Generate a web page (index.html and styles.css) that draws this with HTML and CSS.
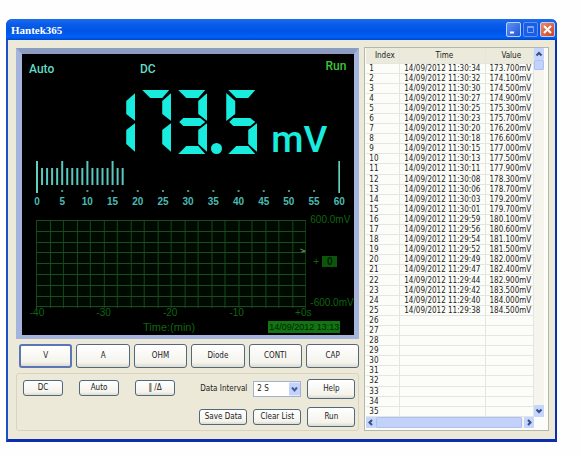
FILE: index.html
```html
<!DOCTYPE html>
<html lang="en">
<head>
<meta charset="utf-8">
<title>Hantek365</title>
<link rel="stylesheet" href="styles.css">
</head>
<body>
<main class="window">
  <header class="titlebar">
    <h1>Hantek365</h1>
    <div class="caption">
      <button type="button" aria-label="Minimize"><svg viewBox="0 0 13 13"><path d="M3 9.5h4" stroke="#fff" stroke-width="2"/></svg></button>
      <button type="button" class="dim" aria-label="Maximize" disabled><svg viewBox="0 0 13 13"><path d="M3.5 3.5h6v6h-6zM3.5 4.5h6" stroke="#7ba6f5" fill="none"/></svg></button>
      <button type="button" class="close" aria-label="Close"><svg viewBox="0 0 13 13"><path d="M3 3l7 7M10 3l-7 7" stroke="#fff" stroke-width="2"/></svg></button>
    </div>
  </header>
  <div class="content">
    <section class="left">
      <div class="display">
        <div class="status"><span>Auto</span><span>DC</span><span class="run">Run</span></div>
        <div class="reading">
          <div class="digits" role="img" aria-label="173.5">
            <div class="digit"><i class="b"></i><i class="c"></i></div>
            <div class="digit"><i class="a"></i><i class="b"></i><i class="c"></i></div>
            <div class="digit"><i class="a"></i><i class="b"></i><i class="g"></i><i class="c"></i><i class="d"></i></div>
            <div class="point"></div>
            <div class="digit"><i class="a"></i><i class="f"></i><i class="g"></i><i class="c"></i><i class="d"></i></div>
          </div>
          <span class="unit">mV</span>
        </div>
        <div class="bargraph">
          <svg id="ticks" viewBox="0 0 304 32" preserveAspectRatio="none"></svg>
          <div class="scale"><span>0</span><span>5</span><span>10</span><span>15</span><span>20</span><span>25</span><span>30</span><span>35</span><span>40</span><span>45</span><span>50</span><span>55</span><span>60</span></div>
        </div>
        <div class="trend">
          <svg id="grid" viewBox="0 0 271 88" preserveAspectRatio="none"></svg>
          <div class="range"><span>600.0mV</span><span class="zero">+ <b>0</b></span><span class="low">-600.0mV</span></div>
          <div class="times"><span>-40</span><span>-30</span><span>-20</span><span>-10</span><span>+0s</span></div>
        </div>
        <div class="foot"><span class="axis">Time:(min)</span><time>14/09/2012 13:13</time></div>
      </div>
      <div class="modes">
        <button type="button" class="active">V</button><button type="button">A</button><button type="button">OHM</button><button type="button">Diode</button><button type="button">CONTI</button><button type="button">CAP</button>
      </div>
      <div class="panel">
        <div class="toggles"><button type="button">DC</button><button type="button">Auto</button><button type="button">‖ /Δ</button></div>
        <div class="actions">
          <label for="interval">Data Interval</label>
          <div class="pick"><select id="interval"><option>2 S</option></select><svg viewBox="0 0 11 13"><rect width="11" height="13" rx="1" fill="#c3d3fb"/><path d="M3 5l2.500 3L8 5" fill="none" stroke="#3f5f96" stroke-width="2"/></svg></div>
          <button type="button" class="tall">Help</button>
          <button type="button">Save Data</button>
          <button type="button">Clear List</button>
          <button type="button" class="tall">Run</button>
        </div>
      </div>
    </section>
    <section class="list">
      <table>
        <thead><tr><th class="idx">Index</th><th>Time</th><th class="val">Value</th></tr></thead>
        <tbody id="rows"></tbody>
      </table>
      <div class="vbar">
        <svg viewBox="0 0 10 12"><rect width="10" height="12" rx="1" fill="#c5d5fb"/><path d="M2.500 7.500L5 5l2.500 2.500" fill="none" stroke="#354f86" stroke-width="2"/></svg>
        <div class="thumb"></div>
        <svg class="down" viewBox="0 0 10 12"><rect width="10" height="12" rx="1" fill="#c5d5fb"/><path d="M2.500 4.500L5 7l2.500-2.500" fill="none" stroke="#354f86" stroke-width="2"/></svg>
      </div>
      <div class="hbar">
        <svg viewBox="0 0 10 11"><rect width="10" height="11" rx="1" fill="#c5d5fb"/><path d="M6 3L3.500 5.500L6 8" fill="none" stroke="#354f86" stroke-width="2"/></svg>
        <div class="thumb"></div>
        <svg viewBox="0 0 10 11"><rect width="10" height="11" rx="1" fill="#c5d5fb"/><path d="M4 3l2.500 2.500L4 8" fill="none" stroke="#354f86" stroke-width="2"/></svg>
      </div>
    </section>
  </div>
</main>
<script src="app.js"></script>
</body>
</html>
```
FILE: styles.css
```css
* { box-sizing: border-box; }
body {
  margin: 0;
  padding: 19px 23px 16px 6px;
  background: #fefefe;
  font: 8px/10px "DejaVu Sans Condensed", "DejaVu Sans", sans-serif;
  color: #222;
}
svg { display: block; }
button, select { font: inherit; color: inherit; margin: 0; padding: 0; }

.window {
  background: #ece9d8;
  border: 2px solid #1c50c8;
  border-top: 0;
  border-right-color: #0a2fae;
  border-bottom: 3px solid #0b2fb0;
  border-radius: 6px 6px 0 0;
}
.titlebar {
  display: flex;
  justify-content: space-between;
  align-items: center;
  height: 21px;
  margin: 0 -2px;
  padding: 0 2px 0 5px;
  border-radius: 6px 6px 0 0;
  background: linear-gradient(#1c6cf0, #0a5ce8 25%, #0054e6 60%, #0062fa 85%, #0048c8);
}
h1 { margin: 0; font: bold 11px/14px "Liberation Serif", serif; color: #fff; }
.caption { display: flex; gap: 2px; }
.caption button {
  width: 15px;
  height: 15px;
  border: 1px solid #b9cffa;
  border-radius: 2px;
  background: linear-gradient(135deg, #5e92f4, #2256d8);
}
.caption .dim { border-color: #5c92f2; background: #1c5ce6; }
.caption .close { background: linear-gradient(135deg, #e98a6c, #cc4420); }

.content {
  display: grid;
  grid-template-columns: 344fr 185fr;
  gap: 5px;
  padding: 8px 6px 8px 8px;
}
.display {
  padding: 6px 14px 2px;
  background: #000;
  border: solid #a4b4dc;
  border-width: 6px 5px 4px 6px;
  border-top-color: #8c9cc0;
}
.status {
  display: grid;
  grid-template-columns: 111px 1fr auto;
  margin: 0 -6px 0 -7px;
  font: 500 12px/18px Roboto, sans-serif;
  color: #62dcc8;
}
.run { line-height: 12px; color: #3cc43c; }
.reading {
  display: flex;
  justify-content: flex-end;
  gap: 14px;
  margin-top: 12px;
  padding-right: 13px;
  color: #18ecdf;
}
.digits { display: flex; gap: 5px; }
.digit { display: grid; width: 31px; height: 64px; }
.digit i { grid-area: 1 / 1; background: #18ecdf; }
.a { clip-path: polygon(2px 0, 29px 0, 22px 8px, 10px 8px); }
.b { clip-path: polygon(31px 3px, 31px 31px, 22px 24px, 22px 11px); }
.c { clip-path: polygon(31px 33px, 31px 62px, 22px 54px, 22px 40px); }
.d { clip-path: polygon(10px 56px, 22px 56px, 29px 64px, 2px 64px); }
.f { clip-path: polygon(0 3px, 9px 11px, 9px 24px, 0 31px); }
.g { clip-path: polygon(7px 28px, 24px 28px, 29px 32px, 24px 36px, 7px 36px, 3px 32px); }
.point { align-self: flex-end; width: 11px; height: 11px; margin: 0 -1px; border-radius: 50%; background: #18ecdf; }
.unit { align-self: flex-end; font: 500 37px/36px Roboto, sans-serif; margin-bottom: -4px; }

.bargraph { margin-top: 7px; }
#ticks { width: 100%; height: 32px; }
.scale {
  display: flex;
  justify-content: space-between;
  margin: 3px -9px 0;
  font: bold 10px/12px "Liberation Sans", sans-serif;
  color: #48bcb4;
}
.scale span { width: 20px; text-align: center; }

.trend {
  display: grid;
  grid-template-columns: minmax(0, 270fr) minmax(0, 34fr);
  margin-top: 12px;
  font: 10px/10px "Liberation Sans", sans-serif;
  color: #0e660e;
}
#grid { width: 100%; height: 88px; }
.range {
  display: flex;
  flex-direction: column;
  justify-content: space-between;
  margin: -5px -14px 0 4px;
  white-space: nowrap;
}
.zero { padding-left: 3px; }
.zero b { padding: 0 5px; background: #0c560c; color: #001c00; }
.times { display: flex; justify-content: space-between; margin: 0 -8px 0 -10px; }
.times span { width: 22px; text-align: center; }
.foot {
  display: flex;
  justify-content: space-between;
  margin-top: 3px;
  padding-left: 107px;
  font: 11px/12px "Liberation Sans", sans-serif;
  color: #0e660e;
}
time { padding: 0 1px; font-size: 9px; background: #127412; color: #002400; }

.left button, select {
  border: 1px solid #52687c;
  border-radius: 3px;
  background: linear-gradient(#fff, #f4f3ec 80%, #dedbcd);
}
.modes {
  display: grid;
  grid-template-columns: repeat(6, 1fr);
  gap: 4px;
  margin: 5px 0 5px 3px;
}
.modes button { height: 24px; }
.left .modes .active { border: 2px solid #5a76b4; }
.panel {
  display: flex;
  justify-content: space-between;
  padding: 5px 3px 3px 6px;
  border: 1px solid #d8d4c0;
  border-radius: 3px;
}
.toggles { display: flex; gap: 16px; padding-top: 1px; }
.toggles button { width: 40px; height: 16px; }
.actions {
  display: grid;
  grid-template-columns: 48px 48px 48px;
  gap: 8px 6px;
  align-items: center;
}
.actions button { height: 16px; }
.actions .tall { height: 20px; }
.actions label { white-space: nowrap; justify-self: end; }
.pick { display: grid; align-items: center; }
select {
  grid-area: 1 / 1;
  appearance: none;
  width: 100%;
  height: 16px;
  padding-left: 3px;
  border-color: #9fb4cc;
  border-radius: 0;
  background: #fff;
}
.pick svg { grid-area: 1 / 1; justify-self: end; width: 11px; height: 14px; margin-right: 1px; pointer-events: none; }

.list {
  display: grid;
  grid-template: 1fr 11px / 1fr 10px;
  margin-top: -1px;
  padding: 0 4px 2px 1px;
  border: 1px solid #b4b8ac;
  background: #fcfcf8;
}
table { width: 100%; height: 100%; border-collapse: collapse; table-layout: fixed; }
th, td {
  padding: 0 0 0 4px;
  border: solid #e4e6e2;
  border-width: 0 1px 1px 0;
  line-height: 9px;
  font-weight: normal;
  white-space: nowrap;
  text-align: left;
}
th { height: 15px; background: #ebeadb; text-align: center; }
.idx { width: 20%; }
.val { width: 29%; }
td:first-child { padding-left: 3px; }
.vbar { display: flex; flex-direction: column; background: #f5f5ee; }
.vbar svg { height: 12px; }
.thumb { background: #c3d2fa; border: 1px solid #adc0f0; border-radius: 1px; }
.vbar .thumb { height: 10px; }
.down { margin-top: auto; }
.hbar { display: flex; background: #f5f5ee; }
.hbar svg { width: 10px; height: 11px; }
.hbar .thumb { flex: 1; margin-right: 2px; }
```
FILE: app.js
```js
const ticks = [];
for (let n = 0; n <= 60; n++) {
  const px = 1 + n * 5.033;
  if (n === 0 || n === 60) ticks.push(`<path d="M${px} 0v32" stroke="#62d0bc" stroke-width="2"/>`);
  else {
    if (n <= 17) ticks.push(`<path d="M${px} ${n % 5 ? 7 : 0}V24" stroke="#58c8c0" stroke-width="2"/>`);
    if (n % 5 === 0) ticks.push(`<path d="M${px - 1} 30h2" stroke="#58c8c0" stroke-width="1.500"/>`);
  }
}
document.getElementById('ticks').innerHTML = ticks.join('');

let grid = '<rect width="271" height="88" fill="#000a00"/>';
for (let c = 0; c <= 20; c++) grid += `<path d="M${Math.round(c * 13.5) + 0.5} 0v88" stroke="#124a18"/>`;
for (let r = 0; r <= 8; r++) grid += `<path d="M0 ${Math.round(r * 10.8) + 0.5}h271" stroke="#1c4a22"/>`;
grid += '<path d="M265 29l5 2l-4 1" stroke="#5a9a5a" fill="none"/>';
document.getElementById('grid').innerHTML = grid;

const readings = [
  ['30:34', 173.7], ['30:32', 174.1], ['30:30', 174.5], ['30:27', 174.9], ['30:25', 175.3],
  ['30:23', 175.7], ['30:20', 176.2], ['30:18', 176.6], ['30:15', 177], ['30:13', 177.5],
  ['30:11', 177.9], ['30:08', 178.3], ['30:06', 178.7], ['30:03', 179.2], ['30:01', 179.7],
  ['29:59', 180.1], ['29:56', 180.6], ['29:54', 181.1], ['29:52', 181.5], ['29:49', 182],
  ['29:47', 182.4], ['29:44', 182.9], ['29:42', 183.5], ['29:40', 184], ['29:38', 184.5]
];
let rows = '';
for (let i = 0; i < 35; i++) {
  const r = readings[i];
  rows += `<tr><td>${i + 1}</td><td>${r ? '14/09/2012 11:' + r[0] : ''}</td><td>${r ? r[1].toFixed(3) + 'mV' : ''}</td></tr>`;
}
document.getElementById('rows').innerHTML = rows;
```
